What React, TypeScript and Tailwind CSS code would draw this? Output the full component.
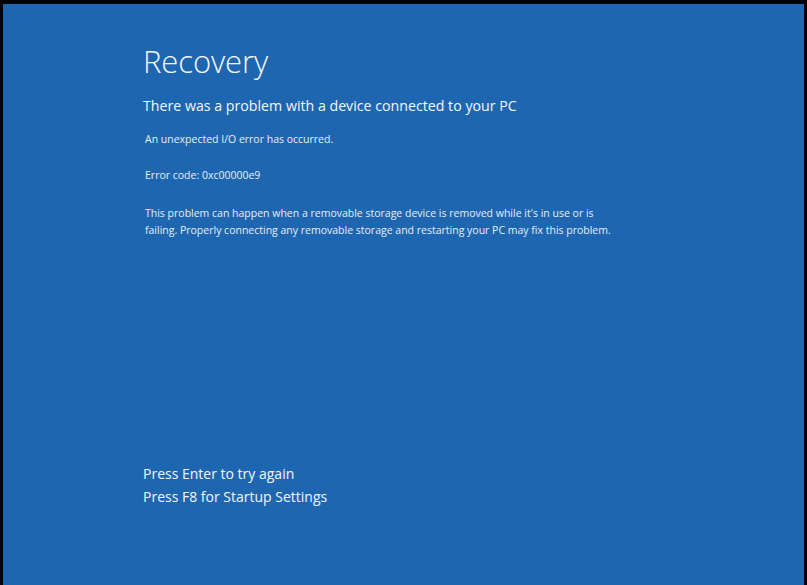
export default function App() {
  return (
    <div className="flex h-[585px] w-[807px] bg-black pl-[3px] pr-[3px] pt-[4px]">
      <div
        className="flex flex-1 flex-col bg-[#1f66b1] pl-[140px] text-[#f2f6fb]"
        style={{ fontFamily: '"Open Sans", "Noto Sans", sans-serif' }}
      >
        <h1 className="mt-[37px] text-[31px] font-light leading-[40px] tracking-[-0.1px]">Recovery</h1>
        <p className="mt-[15px] text-[14.2px] leading-[20px]">There was a problem with a device connected to your PC</p>
        <p className="mt-[16px] ml-[2px] text-[10.5px] leading-[14px] text-[#e6edf6]">An unexpected I/O error has occurred.</p>
        <p className="mt-[22px] ml-[2px] text-[10.5px] leading-[14px] text-[#e6edf6]">Error code: 0xc00000e9</p>
        <p className="mt-[23px] ml-[2px] w-[468px] text-[10.5px] leading-[17px] text-[#e6edf6]">
          This problem can happen when a removable storage device is removed while it's in use or is
          failing. Properly connecting any removable storage and restarting your PC may fix this problem.
        </p>
        <div className="mt-auto mb-[77px] text-[14px] leading-[23px]">
          <p>Press Enter to try again</p>
          <p>Press F8 for Startup Settings</p>
        </div>
      </div>
    </div>
  );
}
